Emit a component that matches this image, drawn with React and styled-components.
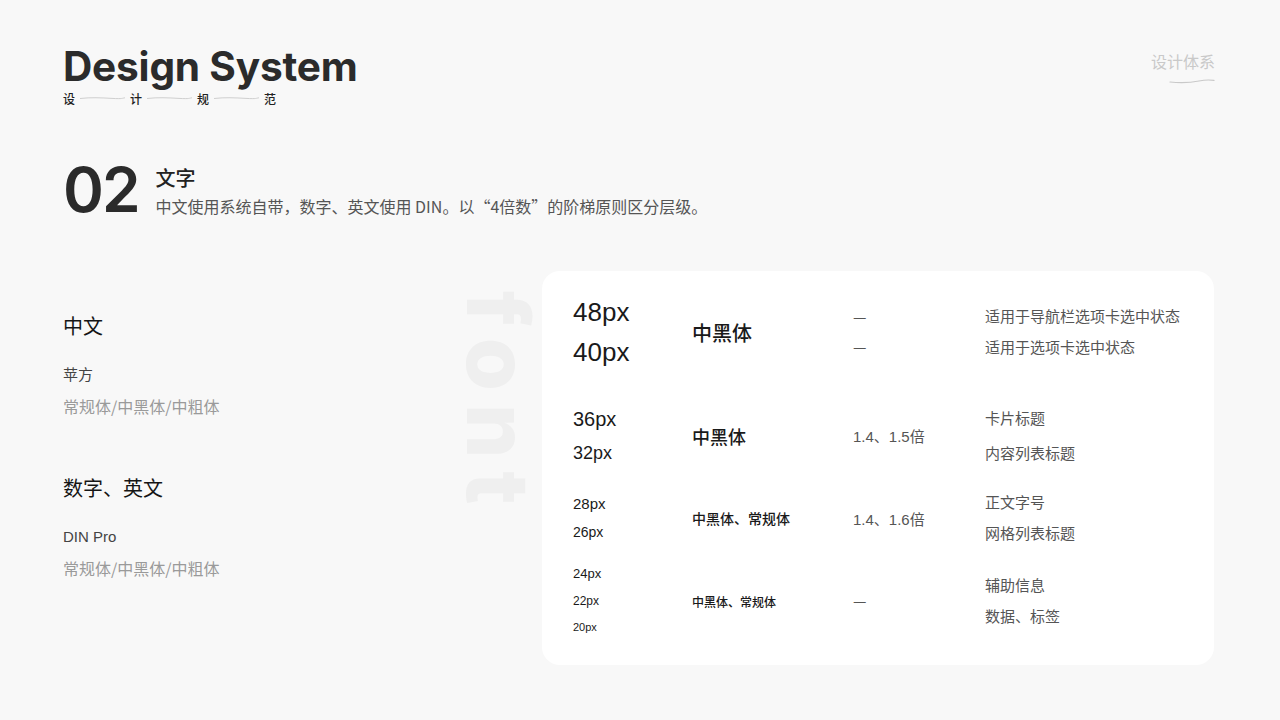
import React from 'react'
import styled, { createGlobalStyle } from 'styled-components'

const GlobalStyle = createGlobalStyle`
  html, body {
    margin: 0;
    padding: 0;
    background: #f8f8f8;
  }
  body {
    font-family: "Liberation Sans", "Noto Sans CJK SC", sans-serif;
    color: #222;
  }
`

const CJK = `"Noto Sans CJK SC", sans-serif`
const MIXED = `"Liberation Sans", "Noto Sans CJK SC", sans-serif`

const Page = styled.div`
  width: 1280px;
  height: 720px;
  box-sizing: border-box;
  padding: 47px 65px 0 63px;
  overflow: hidden;
`

const Header = styled.header`
  display: flex;
  justify-content: space-between;
  align-items: flex-start;
`

const Brand = styled.div`
  display: flex;
  flex-direction: column;
`

const Title = styled.h1`
  margin: 0;
  font-family: Inter, "Open Sans", sans-serif;
  font-weight: 700;
  font-size: 40.6px;
  line-height: 40px;
  letter-spacing: -0.2px;
  color: #2b2b2b;
`

const Tagline = styled.div`
  display: flex;
  align-items: center;
  gap: 5px;
  margin-top: 3px;
  height: 16px;
  font-family: ${CJK};
  font-size: 12px;
  font-weight: 500;
  color: #222;
`

const Squiggle = styled.svg`
  width: 45px;
  height: 6px;
  display: block;
`

const Crumb = styled.div`
  display: flex;
  flex-direction: column;
  align-items: flex-end;
  margin-top: 3px;
  font-family: ${CJK};
  font-size: 16px;
  line-height: 22px;
  color: #c9c9c9;
`

const CrumbLine = styled.svg`
  width: 46px;
  height: 6px;
  margin-top: 6px;
  display: block;
`

const Section = styled.section`
  display: flex;
  align-items: flex-start;
  gap: 17px;
  margin-top: 52px;
`

const Number = styled.div`
  font-family: Inter, "Open Sans", sans-serif;
  font-weight: 600;
  font-size: 62px;
  line-height: 64px;
  letter-spacing: -2px;
  color: #2b2b2b;
`

const SectionText = styled.div`
  display: flex;
  flex-direction: column;
  margin-top: 6px;
`

const SectionTitle = styled.div`
  font-family: ${CJK};
  font-size: 20px;
  font-weight: 500;
  line-height: 28px;
  color: #222;
`

const SectionDesc = styled.div`
  margin-top: 2px;
  font-family: ${CJK};
  font-size: 16px;
  line-height: 24px;
  color: #555;
`

const Main = styled.main`
  display: flex;
  align-items: flex-start;
  margin-top: 49px;
`

const Fonts = styled.div`
  width: 396px;
  display: flex;
  flex-direction: column;
  padding-top: 41px;
`

const FontHead = styled.div`
  margin-top: ${p => p.$top || 0}px;
  font-family: ${CJK};
  font-size: 20px;
  line-height: 28px;
  color: #151515;
`

const FontName = styled.div`
  margin-top: 24px;
  font-family: ${MIXED};
  font-size: 15px;
  line-height: 22px;
  color: #444;
`

const FontWeights = styled.div`
  margin-top: 9px;
  font-family: ${CJK};
  font-size: 16px;
  line-height: 22px;
  color: #9a9a9a;
`

const Watermark = styled.div`
  writing-mode: vertical-rl;
  font-family: Inter, "Open Sans", sans-serif;
  font-weight: 800;
  font-size: 86px;
  line-height: 78px;
  letter-spacing: 13px;
  color: #efefef;
  margin-top: 20px;
  margin-right: 5px;
  user-select: none;
`

const Card = styled.div`
  width: 672px;
  height: 394px;
  box-sizing: border-box;
  padding: 9px 0 0 31px;
  background: #fff;
  border-radius: 18px;
`

const Group = styled.div`
  display: grid;
  grid-template-columns: 119px 161px 132px 1fr;
  align-items: center;
  height: ${p => p.$h}px;
`

const Stack = styled.div`
  display: flex;
  flex-direction: column;
  line-height: ${p => p.$lh}px;
`

const Size = styled.div`
  font-family: ${MIXED};
  font-size: ${p => p.$s}px;
  color: #1a1a1a;
`

const Face = styled.div`
  font-family: ${CJK};
  font-weight: 500;
  font-size: ${p => p.$s}px;
  color: #1a1a1a;
`

const Note = styled.div`
  font-family: ${MIXED};
  font-size: 15px;
  color: #555;
`

const Dash = styled.div`
  font-family: ${CJK};
  font-size: 15px;
  color: #555;
`

const groups = [
  {
    h: 104,
    sizeLh: 40,
    sizes: [[48, 26], [40, 26]],
    face: '中黑体',
    faceSize: 20,
    lh: { dashes: 2, lh: 30 },
    usageLh: 31,
    usage: ['适用于导航栏选项卡选中状态', '适用于选项卡选中状态'],
  },
  {
    h: 103,
    sizeLh: 34,
    sizes: [[36, 20], [32, 18]],
    face: '中黑体',
    faceSize: 18,
    lh: { text: '1.4、1.5倍' },
    usageLh: 35,
    usage: ['卡片标题', '内容列表标题'],
  },
  {
    h: 60,
    sizeLh: 29,
    sizes: [[28, 15], [26, 14]],
    face: '中黑体、常规体',
    faceSize: 14,
    lh: { text: '1.4、1.6倍' },
    usageLh: 31,
    usage: ['正文字号', '网格列表标题'],
  },
  {
    h: 108,
    sizeLh: 26.5,
    sizes: [[24, 13], [22, 12], [20, 11]],
    face: '中黑体、常规体',
    faceSize: 12,
    lh: { dashes: 1, lh: 30 },
    usageLh: 31,
    usage: ['辅助信息', '数据、标签'],
  },
]

const Tag = ['设', '计', '规', '范']

const App = () => (
  <>
    <GlobalStyle />
    <Page>
      <Header>
        <Brand>
          <Title>Design System</Title>
          <Tagline>
            {Tag.map((c, i) => (
              <React.Fragment key={c}>
                {i > 0 && (
                  <Squiggle viewBox="0 0 45 6">
                    <path d="M0 3.5 C11 2.2, 21 2.8, 32 3.4 S42 3.2, 45 2.8" fill="none" stroke="#cfcfcf" strokeWidth="1" />
                  </Squiggle>
                )}
                <span>{c}</span>
              </React.Fragment>
            ))}
          </Tagline>
        </Brand>
        <Crumb>
          设计体系
          <CrumbLine viewBox="0 0 46 6">
            <path d="M1 4 C12 5.2, 22 4.6, 30 3 S42 2, 45 2.4" fill="none" stroke="#c9c9c9" strokeWidth="1.2" strokeLinecap="round" />
          </CrumbLine>
        </Crumb>
      </Header>

      <Section>
        <Number>02</Number>
        <SectionText>
          <SectionTitle>文字</SectionTitle>
          <SectionDesc>中文使用系统自带，数字、英文使用 DIN。以“4倍数”的阶梯原则区分层级。</SectionDesc>
        </SectionText>
      </Section>

      <Main>
        <Fonts>
          <FontHead>中文</FontHead>
          <FontName>苹方</FontName>
          <FontWeights>常规体/中黑体/中粗体</FontWeights>
          <FontHead $top={57}>数字、英文</FontHead>
          <FontName>DIN Pro</FontName>
          <FontWeights>常规体/中黑体/中粗体</FontWeights>
        </Fonts>
        <Watermark>font</Watermark>
        <Card>
          {groups.map((g, i) => (
            <Group key={i} $h={g.h}>
              <Stack $lh={g.sizeLh}>
                {g.sizes.map(([label, s]) => (
                  <Size key={label} $s={s}>{label}px</Size>
                ))}
              </Stack>
              <Face $s={g.faceSize}>{g.face}</Face>
              {g.lh.text ? (
                <Note>{g.lh.text}</Note>
              ) : (
                <Stack $lh={g.lh.lh}>
                  {Array.from({ length: g.lh.dashes }).map((_, k) => (
                    <Dash key={k}>—</Dash>
                  ))}
                </Stack>
              )}
              <Stack $lh={g.usageLh}>
                {g.usage.map(u => (
                  <Note key={u}>{u}</Note>
                ))}
              </Stack>
            </Group>
          ))}
        </Card>
      </Main>
    </Page>
  </>
)

export default App
